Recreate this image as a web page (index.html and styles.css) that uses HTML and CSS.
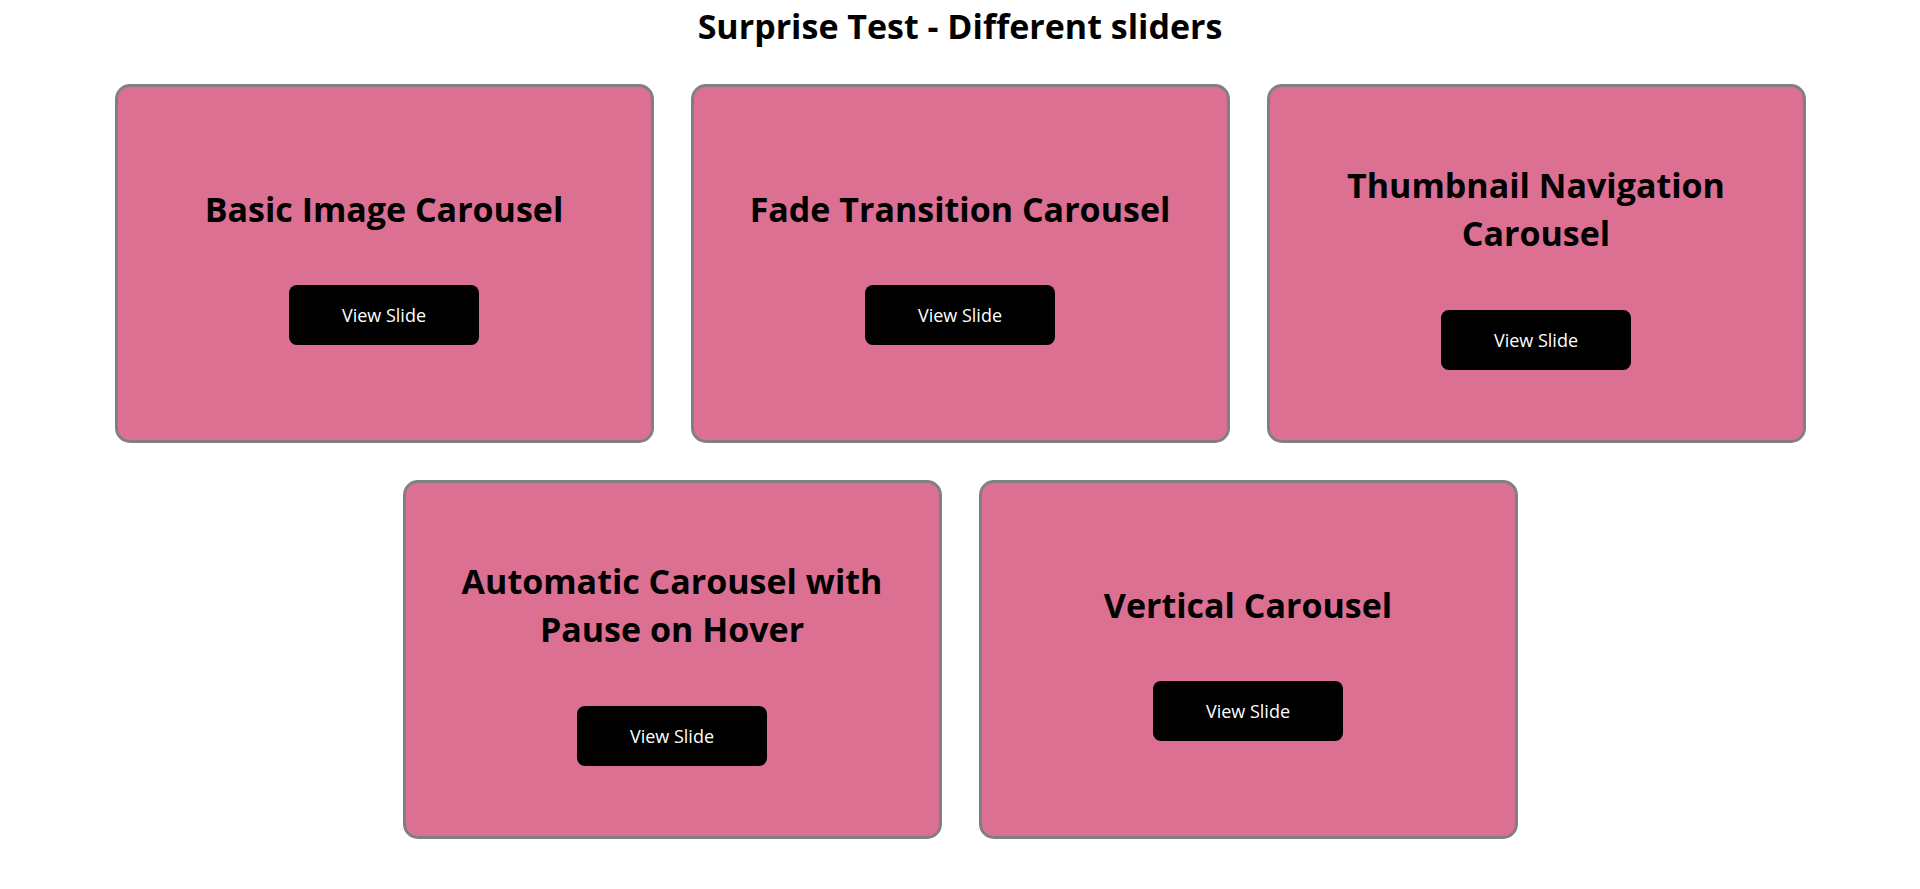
FILE: index.html
```html
<!DOCTYPE html>
<html lang="en">
<head>
<meta charset="utf-8">
<title>Surprise Test - Different sliders</title>
<link rel="stylesheet" href="styles.css">
</head>
<body>
<h1 class="page-title">Surprise Test - Different sliders</h1>
<div class="cards">
  <div class="card">
    <h2 class="card-title">Basic Image Carousel</h2>
    <button class="card-btn">View Slide</button>
  </div>
  <div class="card">
    <h2 class="card-title">Fade Transition Carousel</h2>
    <button class="card-btn">View Slide</button>
  </div>
  <div class="card">
    <h2 class="card-title">Thumbnail Navigation Carousel</h2>
    <button class="card-btn">View Slide</button>
  </div>
  <div class="card">
    <h2 class="card-title">Automatic Carousel with Pause on Hover</h2>
    <button class="card-btn">View Slide</button>
  </div>
  <div class="card">
    <h2 class="card-title">Vertical Carousel</h2>
    <button class="card-btn">View Slide</button>
  </div>
</div>
</body>
</html>
```
FILE: styles.css
```css
html, body {
  margin: 0;
  padding: 0;
  background: #ffffff;
  color: #000000;
  font-family: "Open Sans", "Noto Sans", sans-serif;
}

.page-title {
  margin: 3px 0 35px;
  font-size: 34px;
  font-weight: 700;
  line-height: normal;
  text-align: center;
}

.cards {
  display: flex;
  flex-wrap: wrap;
  justify-content: center;
  gap: 37px;
}

.card {
  box-sizing: border-box;
  width: 539px;
  height: 359px;
  padding: 3px 20px 0;
  background: #db7093;
  border: 3px solid #808080;
  border-radius: 15px;
  display: flex;
  flex-direction: column;
  align-items: center;
  justify-content: center;
  text-align: center;
}

.card-title {
  margin: 0 0 52px;
  font-size: 34px;
  font-weight: 700;
  line-height: 48.5px;
}

.card-btn {
  width: 190px;
  height: 60px;
  padding: 0;
  border: none;
  border-radius: 8px;
  background: #000000;
  color: #ffffff;
  font-family: "Open Sans", "Noto Sans", sans-serif;
  font-size: 18px;
  cursor: pointer;
}
```
